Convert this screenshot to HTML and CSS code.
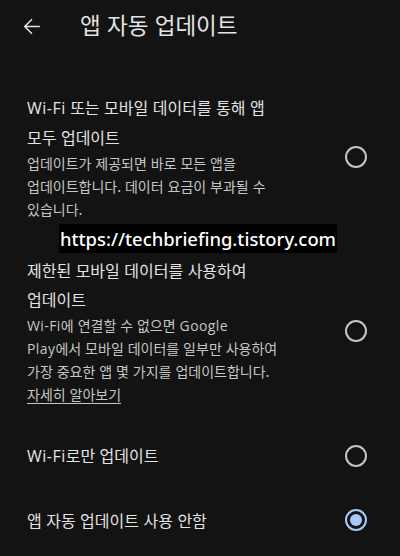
FILE: index.html
```html
<!DOCTYPE html>
<html lang="ko">
<head>
  <meta charset="UTF-8" />
  <meta name="viewport" content="width=device-width, initial-scale=1.0" />
  <title>앱 자동 업데이트</title>
  <link rel="stylesheet" href="styles.css">
</head>
<body>
  <header class="topbar">
    <button class="back" aria-label="뒤로">
      <svg width="25" height="25" viewBox="0 0 24 24">
        <path d="M20 11.2H7.3l5.6-5.6L11.9 4.6 4.5 12l7.4 7.4 1-1-5.6-5.6H20z" fill="#e3e3e3"/>
      </svg>
    </button>
    <h1>앱 자동 업데이트</h1>
  </header>

  <main class="options">
    <label class="option">
      <div class="text">
        <div class="title"><span class="en">Wi-Fi</span> 또는 모바일 데이터를 통해 앱<br>모두 업데이트</div>
        <div class="desc">업데이트가 제공되면 바로 모든 앱을<br>업데이트합니다. 데이터 요금이 부과될 수<br>있습니다.</div>
      </div>
      <span class="radio"></span>
    </label>

    <label class="option">
      <div class="text">
        <div class="title">제한된 모바일 데이터를 사용하여<br>업데이트</div>
        <div class="desc"><span class="en">Wi-Fi</span>에 연결할 수 없으면 <span class="en">Google</span><br><span class="en">Play</span>에서 모바일 데이터를 일부만 사용하여<br>가장 중요한 앱 몇 가지를 업데이트합니다.<br><a href="#">자세히 알아보기</a></div>
      </div>
      <span class="radio"></span>
    </label>

    <label class="option">
      <div class="text">
        <div class="title"><span class="en">Wi-Fi</span>로만 업데이트</div>
      </div>
      <span class="radio"></span>
    </label>

    <label class="option">
      <div class="text">
        <div class="title">앱 자동 업데이트 사용 안함</div>
      </div>
      <span class="radio checked"></span>
    </label>
  </main>

  <div class="watermark">https://techbriefing.tistory.com</div>
</body>
</html>
```

FILE: styles.css
```css
:root {
  font-family: "Noto Sans CJK KR", "Noto Sans", sans-serif;
}

body {
  margin: 0;
  min-height: 100vh;
  background: #131313;
  color: #e3e3e3;
  position: relative;
}

.topbar {
  display: flex;
  align-items: center;
  height: 48px;
}

.back {
  display: flex;
  align-items: center;
  justify-content: center;
  width: 25px;
  height: 25px;
  margin: 4px 0 0 19px;
  padding: 0;
  background: none;
  border: none;
}

.topbar h1 {
  margin: 0 0 0 36px;
  font-size: 22.5px;
  font-weight: 400;
  line-height: 28px;
  letter-spacing: 0;
}

.options {
  padding-top: 28px;
}

.option {
  display: flex;
  align-items: center;
  padding: 17px 33px 18px 27px;
}

.text {
  flex: 1;
}

.title {
  font-size: 16px;
  line-height: 28.5px;
  color: #e3e3e3;
}

.desc {
  font-size: 14px;
  line-height: 23px;
  color: #c4c7c5;
  margin-top: 1px;
}

/* latin words run a bit wider than the hangul font's own */
.en {
  font-family: "Open Sans", "Noto Sans", sans-serif;
  letter-spacing: 0.03em;
}

.desc a {
  color: #c4c7c5;
  text-decoration: underline;
  text-underline-offset: 3px;
}

.radio {
  box-sizing: border-box;
  width: 22px;
  height: 22px;
  border: 2px solid #c4c7c5;
  border-radius: 50%;
  position: relative;
}

.radio.checked {
  border-color: #a8c7fa;
}

.radio.checked::after {
  content: "";
  position: absolute;
  top: 3px;
  left: 3px;
  width: 12px;
  height: 12px;
  border-radius: 50%;
  background: #a8c7fa;
}

.watermark {
  position: absolute;
  top: 224px;
  left: 59px;
  width: 278px;
  height: 29px;
  background: #000;
  color: #fff;
  font-family: "Noto Sans", sans-serif;
  font-size: 18.4px;
  font-weight: 500;
  line-height: 29px;
  text-align: center;
}
```
